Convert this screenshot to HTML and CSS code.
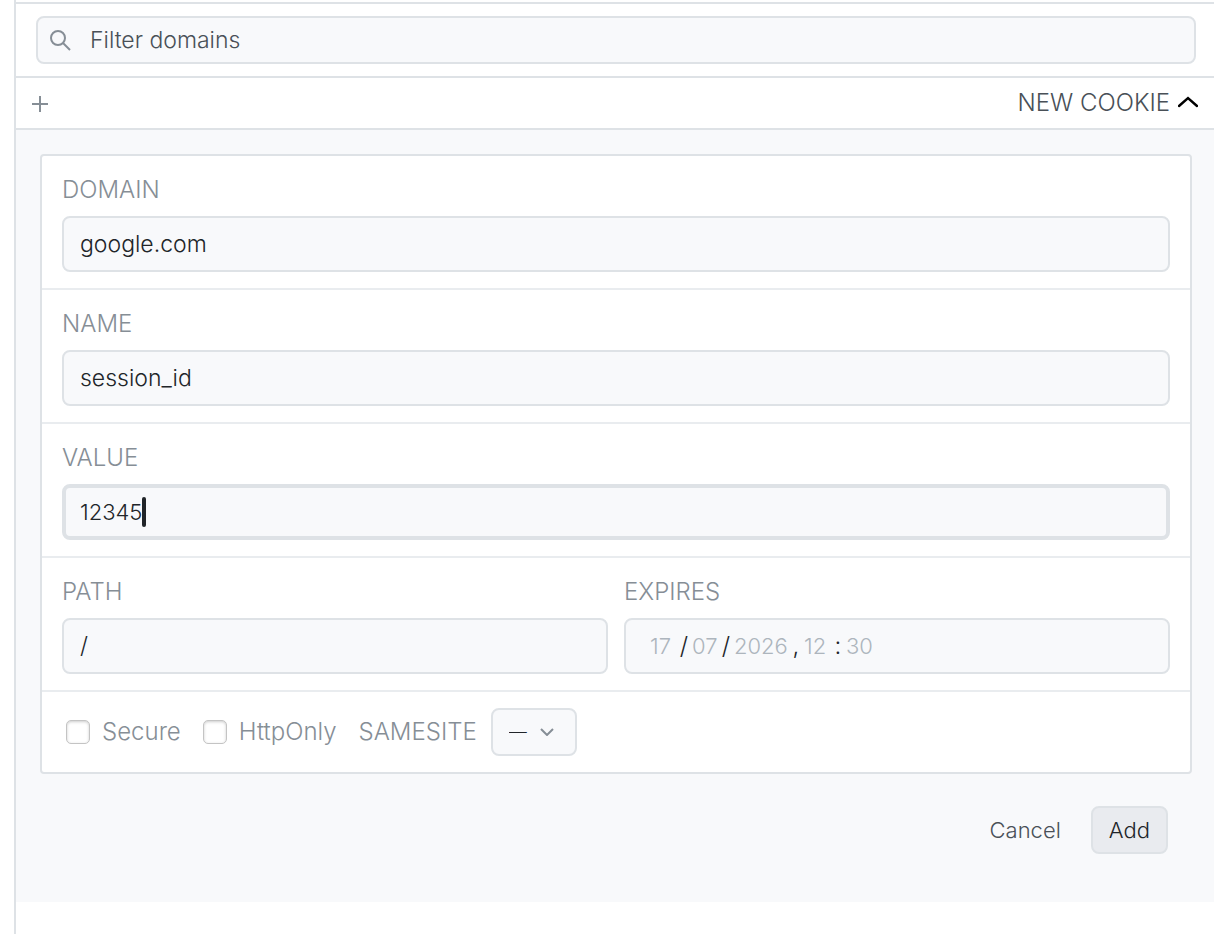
FILE: index.html
```html
<!DOCTYPE html>
<html lang="en">
<head>
  <meta charset="UTF-8">
  <title>Cookies</title>
  <link rel="stylesheet" href="styles.css">
</head>
<body>
  <main class="panel">
    <div class="filter-bar">
      <label class="filter">
        <svg class="filter-icon" width="24" height="24" viewBox="0 0 24 24" aria-hidden="true">
          <circle cx="10" cy="10" r="7"/>
          <path d="M15 15l7 7"/>
        </svg>
        <input class="filter-input" type="text" placeholder="Filter domains" aria-label="Filter domains">
      </label>
    </div>

    <div class="toolbar">
      <button class="icon-button" type="button" aria-label="Add cookie">
        <svg width="16" height="18" viewBox="0 0 16 18" aria-hidden="true">
          <path d="M8 2v16M0 10h16"/>
        </svg>
      </button>
      <button class="toggle" type="button">
        NEW COOKIE
        <svg width="20" height="14" viewBox="0 0 20 14" aria-hidden="true">
          <path d="M1 10l9-8 9 8"/>
        </svg>
      </button>
    </div>

    <form class="editor">
      <div class="card">
        <div class="row">
          <label class="label" for="domain">DOMAIN</label>
          <input class="field" id="domain" type="text" value="google.com">
        </div>

        <div class="row">
          <label class="label" for="name">NAME</label>
          <input class="field" id="name" type="text" value="session_id">
        </div>

        <div class="row">
          <label class="label" for="value">VALUE</label>
          <div class="field active">
            <input class="value-input" id="value" type="text" value="12345">
            <span class="caret"></span>
          </div>
        </div>

        <div class="row split">
          <div>
            <label class="label" for="path">PATH</label>
            <input class="field" id="path" type="text" value="/">
          </div>
          <div>
            <label class="label" for="day">EXPIRES</label>
            <div class="field date">
              <input class="two" id="day" type="text" placeholder="17">
              <span class="sep">/</span>
              <input class="two" type="text" placeholder="07" aria-label="Month">
              <span class="sep">/</span>
              <input class="four" type="text" placeholder="2026" aria-label="Year">
              <span class="sep">,</span>
              <input class="two" type="text" placeholder="12" aria-label="Hour">
              <span class="sep">:</span>
              <input class="two" type="text" placeholder="30" aria-label="Minute">
            </div>
          </div>
        </div>

        <div class="row flags">
          <label class="check"><input type="checkbox" name="secure"> Secure</label>
          <label class="check"><input type="checkbox" name="httponly"> HttpOnly</label>
          <label class="samesite" for="samesite">SAMESITE</label>
          <div class="select">
            <select id="samesite">
              <option>—</option>
              <option>Lax</option>
              <option>Strict</option>
              <option>None</option>
            </select>
            <svg class="chevron" width="14" height="8" viewBox="0 0 14 8" aria-hidden="true">
              <path d="M1 1l6 6 6-6"/>
            </svg>
          </div>
        </div>
      </div>

      <div class="actions">
        <button class="button" type="button">Cancel</button>
        <button class="button primary" type="submit">Add</button>
      </div>
    </form>
  </main>
</body>
</html>
```
FILE: styles.css
```css
* {
  box-sizing: border-box;
}

body {
  margin: 0;
  background: #fff;
  color: #212529;
  font-family: Inter, "Liberation Sans", sans-serif;
  font-size: 24px;
  font-weight: 300;
  line-height: 32px;
}

input,
select,
button {
  margin: 0;
  font: inherit;
  color: inherit;
}

button {
  padding: 0;
  border: none;
  background: none;
  cursor: pointer;
}

svg {
  fill: none;
  stroke: #868e96;
  stroke-width: 2;
}

.panel {
  min-height: 100vh;
  margin-left: 14px;
  padding-top: 2px;
  border-left: 2px solid #dee2e6;
}

.filter-bar {
  padding: 12px 18px 12px 20px;
  border-top: 2px solid #dee2e6;
  border-bottom: 2px solid #dee2e6;
}

.filter {
  display: flex;
  align-items: center;
  gap: 18px;
  height: 48px;
  padding: 0 10px;
  background: #f8f9fb;
  border: 2px solid #dee2e6;
  border-radius: 8px;
  font-size: 23px;
}

.filter-input {
  flex: 1;
  padding: 0;
  border: none;
  outline: none;
  background: none;
}

.filter-input::placeholder {
  color: #495057;
}

.toolbar {
  display: flex;
  align-items: center;
  justify-content: space-between;
  height: 52px;
  padding: 0 16px;
  border-bottom: 2px solid #dee2e6;
}

.icon-button {
  display: flex;
}

.toggle {
  display: flex;
  align-items: center;
  gap: 8px;
  color: #495057;
}

.toggle svg {
  stroke: #000;
  stroke-width: 2.4;
  stroke-linecap: round;
}

.editor {
  padding: 24px 22px 48px 24px;
  background: #f8f9fb;
}

.card {
  background: #fff;
  border: 2px solid #dee2e6;
  border-radius: 4px;
}

.row {
  padding: 18px 20px 16px;
}

.row + .row {
  border-top: 2px solid #e9ecef;
}

.label {
  display: block;
  margin-bottom: 10px;
  color: #868e96;
}

.field {
  display: block;
  width: 100%;
  height: 56px;
  padding: 0 16px;
  background: #f8f9fb;
  border: 2px solid #dee2e6;
  border-radius: 8px;
  font-size: 23px;
}

.active {
  display: flex;
  align-items: center;
  padding: 0 14px;
  border-width: 4px;
}

/* the input hugs its text so the caret sits right after it */
.value-input {
  field-sizing: content;
  padding: 0;
  border: none;
  outline: none;
  background: none;
  font-size: 22px;
}

.caret {
  width: 4px;
  height: 30px;
  background: #212529;
  border-radius: 2px;
}

.split {
  display: grid;
  grid-template-columns: 1fr 1fr;
  gap: 16px;
}

.date {
  display: flex;
  align-items: center;
  padding: 0 24px;
  font-size: 22px;
}

.date input {
  padding: 0;
  border: none;
  outline: none;
  background: none;
}

.date input::placeholder {
  color: #adb5bd;
}

.two {
  width: 26px;
}

.four {
  width: 54px;
}

.sep {
  width: 16px;
  font-size: 24px;
  text-align: center;
}

.flags {
  display: flex;
  align-items: center;
  padding: 16px 24px;
  color: #868e96;
}

.check {
  display: flex;
  align-items: center;
  gap: 12px;
  margin-right: 22px;
}

.check input {
  appearance: none;
  width: 24px;
  height: 24px;
  background: #fff;
  border: 1px solid #c4c4c4;
  border-radius: 5px;
  box-shadow: inset 0 1px 3px #ccc;
}

.samesite {
  margin-right: 14px;
}

.select {
  position: relative;
}

.select select {
  display: block;
  appearance: none;
  width: 86px;
  height: 48px;
  padding: 0 16px;
  color: #212529;
  background: #f8f9fb;
  border: 2px solid #dee2e6;
  border-radius: 8px;
  font-size: 18px;
}

.chevron {
  position: absolute;
  top: 20px;
  right: 23px;
  pointer-events: none;
}

.actions {
  display: flex;
  justify-content: flex-end;
  gap: 12px;
  padding: 32px 24px 0;
}

.button {
  height: 48px;
  padding: 0 16px;
  border: 2px solid transparent;
  border-radius: 8px;
  color: #495057;
  font-size: 22px;
}

.primary {
  color: #212529;
  background: #e9ebef;
  border-color: #dee2e6;
}
```
